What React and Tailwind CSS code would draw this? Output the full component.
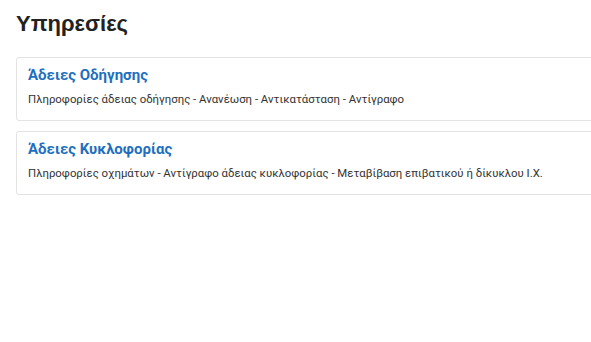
const services = [
  {
    title: 'Άδειες Οδήγησης',
    text: 'Πληροφορίες άδειας οδήγησης - Ανανέωση - Αντικατάσταση - Αντίγραφο',
  },
  {
    title: 'Άδειες Κυκλοφορίας',
    text: 'Πληροφορίες οχημάτων - Αντίγραφο άδειας κυκλοφορίας - Μεταβίβαση επιβατικού ή δίκυκλου Ι.Χ.',
  },
];

const App = () => {
  return (
    <div className="w-[591px] h-[342px] overflow-hidden bg-white pl-4 pt-[10px]">
      <h1 className="text-[22px] font-bold text-[#222] font-['Liberation_Sans',Arial,sans-serif] leading-[28px]">
        Υπηρεσίες
      </h1>
      <div className="mt-[19px] flex flex-col gap-[10px] font-['Roboto',sans-serif]">
        {services.map((s) => (
          <div
            key={s.title}
            className="w-[600px] border border-[#e3e3e3] rounded-[3px] bg-white px-[11px] pt-[7px] pb-[13px]"
          >
            <h3 className="text-[15px] font-bold text-[#1f6fbf] leading-[20px]">{s.title}</h3>
            <p className="mt-[6px] text-[11.4px] text-[#333] leading-[16px]">{s.text}</p>
          </div>
        ))}
      </div>
    </div>
  );
};

export default App;
